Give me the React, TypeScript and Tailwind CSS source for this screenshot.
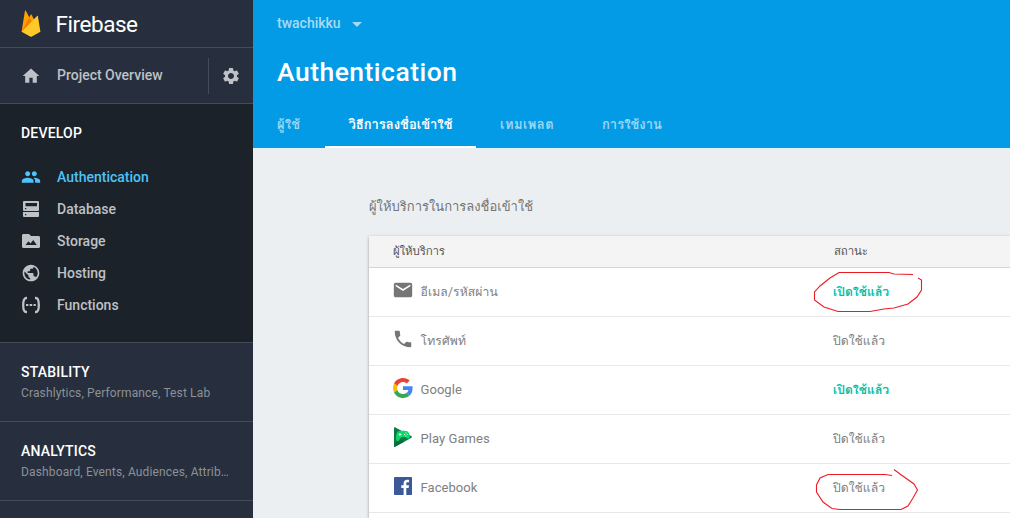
import type { ReactNode } from 'react';
import { MdHome, MdSettings, MdPeople, MdPublic, MdEmail, MdPhone } from 'react-icons/md';

const DatabaseIcon = () => (
  <svg width="20" height="20" viewBox="0 0 20 20" fill="currentColor">
    <path fillRule="evenodd" d="M3.3 2h13.4c.8 0 1.3.5 1.3 1.3v7.4c0 .8-.5 1.3-1.3 1.3H3.3C2.500 12 2 11.500 2 10.700V3.300C2 2.500 2.500 2 3.300 2zM4.500 4v3.200h11.500V4zM4 9v1.300h1.300V9z" />
    <path fillRule="evenodd" d="M2 13h16v3.700c0 .8-.5 1.300-1.300 1.300H3.300C2.500 18 2 17.500 2 16.700zM4 15v1.300h1.300V15z" />
  </svg>
);

const StorageIcon = () => (
  <svg width="20" height="20" viewBox="0 0 20 20" fill="currentColor">
    <path fillRule="evenodd" d="M2.500 3H8l2 2h7.500c.9 0 1.500.6 1.500 1.500v9c0 .9-.6 1.500-1.500 1.500h-15C1.600 17 1 16.400 1 15.500v-11C1 3.600 1.600 3 2.500 3zM4.500 14h11.300l-3.600-5-2.700 3.500-2-2.300z" />
  </svg>
);

const FunctionsIcon = () => (
  <svg width="20" height="20" viewBox="0 0 20 20">
    <path d="M6 3H5.200C3.200 3 2.200 5.800 2.200 10s1 7 3 7H6M14 3h.8c2 0 3 2.800 3 7s-1 7-3 7H14" fill="none" stroke="currentColor" strokeWidth="2.300" />
    <path d="M5 9.100h2.300v1.800H5zM8.600 9.100h2.600v1.800H8.600zM12.500 9.100h2.300v1.800h-2.300z" fill="currentColor" />
  </svg>
);

const FirebaseLogo = () => (
  <svg width="20" height="28" viewBox="0 0 20 28">
    <path fill="#ffa000" d="M.6 21.700 3.900.9c.1-.5.700-.6.900-.2l3.500 6.600 1.400-2.600c.2-.4.700-.4.900 0l8.700 17z" />
    <path fill="#f57c00" d="M11.700 13.700 8.300 7.300.6 21.700z" />
    <path fill="#ffca28" d="M19.400 21.700 16.900 6.200c-.1-.4-.5-.5-.8-.3L.6 21.700l8.500 4.900c.6.300 1.200.3 1.800 0z" />
  </svg>
);

const GoogleIcon = () => (
  <svg width="20" height="20" viewBox="0 0 48 48">
    <path fill="#EA4335" d="M24 9.500c3.540 0 6.710 1.220 9.210 3.600l6.850-6.850C35.900 2.380 30.470 0 24 0 14.620 0 6.510 5.380 2.560 13.220l7.980 6.190C12.430 13.720 17.740 9.500 24 9.500z" />
    <path fill="#4285F4" d="M46.980 24.550c0-1.570-.15-3.090-.38-4.550H24v9.020h12.940c-.58 2.960-2.260 5.480-4.780 7.180l7.730 6c4.510-4.180 7.090-10.360 7.090-17.650z" />
    <path fill="#FBBC05" d="M10.530 28.590c-.48-1.450-.76-2.990-.76-4.590s.27-3.140.76-4.590l-7.980-6.190C.92 16.460 0 20.120 0 24c0 3.880.92 7.540 2.560 10.780l7.970-6.190z" />
    <path fill="#34A853" d="M24 48c6.480 0 11.930-2.130 15.890-5.810l-7.730-6c-2.150 1.450-4.920 2.300-8.160 2.300-6.260 0-11.570-4.220-13.470-9.910l-7.980 6.190C6.510 42.620 14.620 48 24 48z" />
  </svg>
);

const PlayGamesIcon = () => (
  <svg width="20" height="20" viewBox="0 0 20 20">
    <path fill="#0b7a45" d="M1 .8C1 .2 1.500 0 2 .3l16.500 9c.6.400.6 1 0 1.400L2 19.700c-.5.300-1 .1-1-.5z" />
    <path fill="#0a6a3c" d="M3 15.500 6 13l5.500 1.500L2 19.700c-.5.300-1 .1-1-.5z" />
    <path fill="#08d868" d="M5.300 4.300c2-.8 7.200-.8 9 0 1.700.7 2.500 4 2.500 6 0 1.600-1.500 2-2.600 1-1-.9-1.700-1.300-3.200-1.300-2.400 0-3.400.6-4.400 2.500-1 2-3.600 2.200-3.600-.2 0-3 .4-7.200 2.300-8z" />
    <path d="M7 6v3M5.500 7.500h3" stroke="#d9ffe9" strokeWidth=".9" />
    <path fill="#d9ffe9" d="M12.400 5.600h1v1h-1zM12.400 8.400h1v1h-1zM11 7h1v1h-1zM13.800 7h1v1h-1z" />
  </svg>
);

const FacebookIcon = () => (
  <svg width="18" height="18" viewBox="0 0 18 18">
    <rect width="18" height="18" rx=".8" fill="#3b5998" />
    <path fill="#fff" d="M12.300 18v-6.900h2.300l.4-2.800h-2.700V6.600c0-.8.3-1.300 1.400-1.300h1.400V2.900c-.3 0-1.100-.1-2-.1-2.100 0-3.500 1.200-3.500 3.500v2H7.300v2.800h2.300V18z" />
  </svg>
);

const navItems: { label: string; icon: ReactNode; active?: boolean }[] = [
  { label: 'Authentication', icon: <MdPeople size={20} />, active: true },
  { label: 'Database', icon: <DatabaseIcon /> },
  { label: 'Storage', icon: <StorageIcon /> },
  { label: 'Hosting', icon: <MdPublic size={20} /> },
  { label: 'Functions', icon: <FunctionsIcon /> },
];

const providers: { label: string; icon: ReactNode; enabled: boolean; latin?: boolean }[] = [
  { label: 'อีเมล/รหัสผ่าน', icon: <MdEmail size={22} />, enabled: true },
  { label: 'โทรศัพท์', icon: <MdPhone size={22} />, enabled: false },
  { label: 'Google', icon: <GoogleIcon />, enabled: true, latin: true },
  { label: 'Play Games', icon: <PlayGamesIcon />, enabled: false, latin: true },
  { label: 'Facebook', icon: <FacebookIcon />, enabled: false, latin: true },
];

function Sidebar() {
  return (
    <aside className="flex h-full w-[253px] shrink-0 flex-col bg-[#272f3e] text-[#bec1c5]">
      <div className="flex h-12 shrink-0 items-center border-b border-[#434c58] pl-[21px]">
        <FirebaseLogo />
        <span className="ml-[14.500px] pt-0.5 text-[22.500px] leading-none tracking-[-0.450px] text-white">Firebase</span>
      </div>
      <div className="flex h-14 shrink-0 items-center border-b border-[#434c58] pl-[21px]">
        <MdHome size={20} />
        <span className="ml-4 w-[151px] pb-px text-sm font-medium leading-5">Project Overview</span>
        <div className="flex h-9 items-center border-l border-[#434c58] pl-3">
          <MdSettings size={20} />
        </div>
      </div>
      <section className="h-[238px] shrink-0 bg-[#1b222a] pl-[21px] pt-[19px]">
        <h2 className="text-sm font-medium leading-5 tracking-[0.200px] text-white">DEVELOP</h2>
        <ul className="mt-[18px]">
          {navItems.map((item) => (
            <li key={item.label} className={item.active ? 'flex h-8 items-center text-[#4fc3f7]' : 'flex h-8 items-center'}>
              {item.icon}
              <span className="ml-4 text-sm font-medium leading-5">{item.label}</span>
            </li>
          ))}
        </ul>
      </section>
      <SidebarGroup title="STABILITY" detail="Crashlytics, Performance, Test Lab" />
      <SidebarGroup title="ANALYTICS" detail="Dashboard, Events, Audiences, Attrib…" />
      <div className="shrink-0 border-t border-[#434c58]" />
    </aside>
  );
}

function SidebarGroup({ title, detail }: { title: string; detail: string }) {
  return (
    <section className="h-[79px] shrink-0 border-t border-[#434c58] pl-[21px] pt-[19px]">
      <h2 className="text-sm font-medium leading-5 tracking-[0.200px] text-white">{title}</h2>
      <p className="whitespace-nowrap text-xs leading-[22px] tracking-[0.140px] text-[#8c9198]">{detail}</p>
    </section>
  );
}

function Header() {
  return (
    <header className="flex h-[148px] shrink-0 flex-col bg-[#039be5] text-white">
      <div className="flex h-[47px] items-center pl-6 text-[#a5daf5]">
        <span className="pb-px text-sm font-medium leading-5">twachikku</span>
        <svg className="ml-[11px] mt-0.5" width="10" height="5" viewBox="0 0 10 5" fill="currentColor">
          <path d="M0 0h10L5 5z" />
        </svg>
      </div>
      <h1 className="flex h-[50px] items-center pl-6 text-[26.500px] font-medium leading-none tracking-[0.480px]">Authentication</h1>
      <nav className="flex h-[51px] text-[13px] font-semibold text-[#9ad7f5]">
        <a className="flex w-[72px] items-center pb-[2px] pl-6 pt-[6px] tracking-[0.200px]"><span className="whitespace-nowrap">ผู้ใช้</span></a>
        <a className="flex w-[151px] items-center justify-center border-b-2 border-white pt-[6px] text-white"><span className="whitespace-nowrap">วิธีการลงชื่อเข้าใช้</span></a>
        <a className="flex w-[102px] items-center pb-[2px] pl-6 pt-[6px] tracking-[0.450px]"><span className="whitespace-nowrap">เทมเพลต</span></a>
        <a className="flex items-center pb-[2px] pl-6 pt-[6px]"><span className="whitespace-nowrap">การใช้งาน</span></a>
      </nav>
    </header>
  );
}

function ProviderTable() {
  return (
    <div className="relative flex-1 bg-white text-[12.200px] shadow-[0_1px_3px_rgba(0,0,0,0.35)]">
      <div className="flex h-8 items-center border-b border-[#d5d5d5] bg-[#f4f4f4] pl-6 text-[11.500px] tracking-[-0.150px] text-[#555]">
        <span className="w-[441px]">ผู้ให้บริการ</span>
        <span>สถานะ</span>
      </div>
      {providers.map((p) => (
        <div key={p.label} className="flex h-[49px] items-center border-b border-[#e8e8e8] pl-[23px] text-[#808080]">
          <span className="mb-1 flex w-[22px] justify-center text-[#757575]">{p.icon}</span>
          <span className={p.latin ? 'ml-[6.500px] w-[412.500px] text-[13px] tracking-[0.060px]' : 'ml-[6.500px] w-[412.500px] tracking-[0.100px]'}>{p.label}</span>
          {p.enabled ? <span className="font-semibold text-[#00bfa5]">เปิดใช้แล้ว</span> : <span>ปิดใช้แล้ว</span>}
        </div>
      ))}
      <svg className="pointer-events-none absolute left-[441px] top-[30px]" width="120" height="250" viewBox="810 266 120 250" fill="none" stroke="#ed1c24" strokeWidth="1.100">
        <path d="M913 274.500 894 274 889 272.500 839 272.500 830 278 820 286 814.500 292 814.500 300 824 307 838 311.500 870 311.500 884 309 894 308 908 304 917 297 921.500 290 921.500 280 918 278" />
        <path d="M892 475.500 885 474.500 828 474.500 820 478 816.500 485 816.500 492 823 502 832 508.500 840 509.500 901 509.500 908 506 913 498 917.500 490 914 484 900 474 894 469.500" />
      </svg>
    </div>
  );
}

export default function App() {
  return (
    <div className="flex h-[518px] w-[1010px] overflow-hidden bg-[#eceff1] font-['Roboto','Loma','Noto_Sans_Thai_Looped',sans-serif]">
      <Sidebar />
      <main className="flex min-w-0 flex-1 flex-col">
        <Header />
        <section className="flex flex-1 flex-col pl-[116px]">
          <h2 className="flex h-[88px] shrink-0 items-center pt-[29px] text-[13px] text-[#757575]">ผู้ให้บริการในการลงชื่อเข้าใช้</h2>
          <ProviderTable />
        </section>
      </main>
    </div>
  );
}
